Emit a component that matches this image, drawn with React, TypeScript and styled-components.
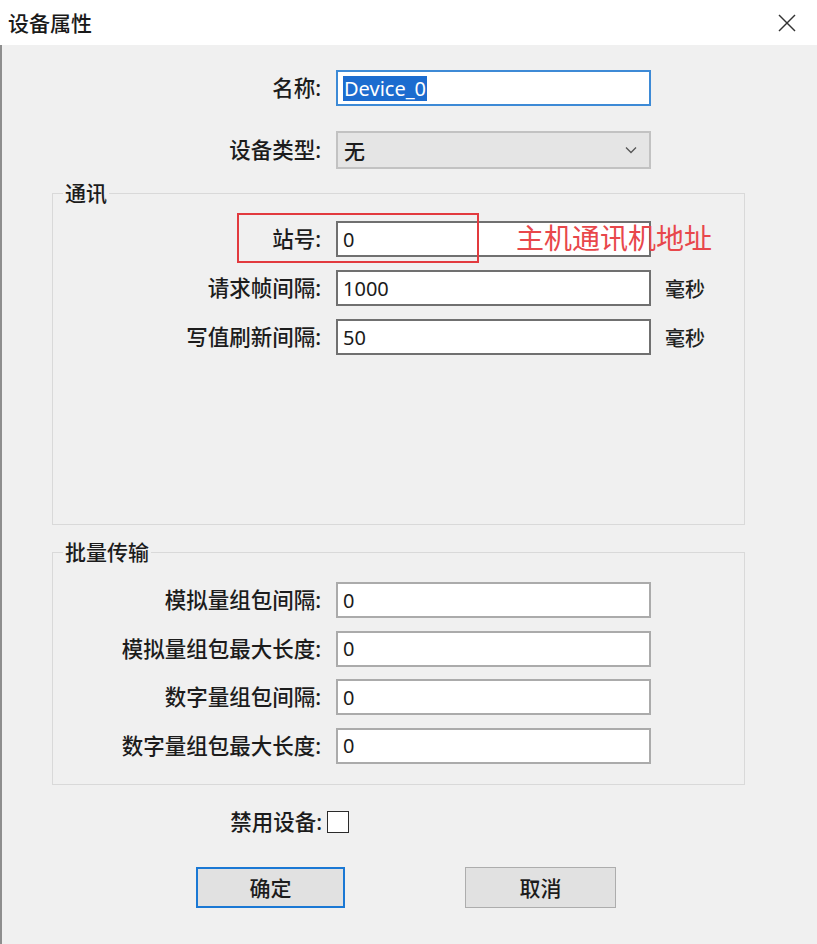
import React from "react";
import styled, { createGlobalStyle } from "styled-components";

const GlobalStyle = createGlobalStyle`
  html, body { margin: 0; padding: 0; background: #f0f0f0; }
  body {
    font-family: "Noto Sans", "Noto Sans CJK SC", sans-serif;
    font-weight: 500;
    color: #1c1c1c;
  }
  * { box-sizing: border-box; }
`;

const Window = styled.div`
  width: 817px;
  height: 944px;
  display: flex;
  flex-direction: column;
  background: #f0f0f0;
  overflow: hidden;
`;

const TitleBar = styled.div`
  height: 45px;
  flex-shrink: 0;
  background: #ffffff;
  display: flex;
  align-items: center;
  justify-content: space-between;
  padding: 0 21px 0 8px;
`;

const Title = styled.div`
  font-size: 21px;
  line-height: 28px;
  color: #1a1a1a;
`;

const CloseButton = styled.div`
  width: 18px;
  height: 18px;
  display: flex;
  color: #333;
`;

const Body = styled.div`
  flex: 1;
  border-left: 2px solid #8e8e8e;
  display: flex;
  flex-direction: column;
  padding-top: 25px;
`;

const FieldRow = styled.div<{ $label: number; $height?: number; $top?: number }>`
  position: relative;
  display: grid;
  grid-template-columns: ${(p) => p.$label}px 315px auto;
  column-gap: 15px;
  align-items: center;
  height: ${(p) => p.$height ?? 36}px;
  margin-top: ${(p) => p.$top ?? 0}px;
`;

const Label = styled.div`
  text-align: right;
  white-space: nowrap;
  font-size: 21.5px;
  line-height: 28px;
`;

const TextBox = styled.div<{ $tone: "focus" | "dark" | "light" }>`
  height: 100%;
  display: flex;
  align-items: center;
  padding-left: 5px;
  background: #ffffff;
  font-size: 20px;
  font-weight: 400;
  color: #1a1a1a;
  border: 2px solid
    ${(p) => (p.$tone === "focus" ? "#3d8ad6" : p.$tone === "dark" ? "#707070" : "#ababab")};
`;

const Selected = styled.span`
  background: #1c6ccf;
  color: #ffffff;
  height: 25px;
  line-height: 25px;
  padding: 0 1px;
`;

const Combo = styled.div`
  height: 100%;
  display: flex;
  align-items: center;
  justify-content: space-between;
  padding: 0 12px 0 6px;
  background: #e5e5e5;
  border: 2px solid #c2c2c2;
  font-size: 21px;
`;

const Unit = styled.div`
  font-size: 20px;
  margin-left: -1px;
  color: #222;
`;

const Group = styled.fieldset<{ $top: number; $padTop: number; $padBottom: number }>`
  margin: ${(p) => p.$top}px 0 0 50px;
  width: 693px;
  min-width: 0;
  border: 1px solid #d9d9d9;
  padding: ${(p) => p.$padTop}px 0 ${(p) => p.$padBottom}px 0;
`;

const GroupTitle = styled.legend`
  margin-left: 10px;
  padding: 0 2px;
  font-size: 21px;
  line-height: 28px;
`;

const Rows = styled.div<{ $gap: number }>`
  display: flex;
  flex-direction: column;
  gap: ${(p) => p.$gap}px;
`;

const AnnotationBox = styled.div`
  position: absolute;
  left: 184px;
  top: -8px;
  width: 242px;
  height: 50px;
  border: 2px solid #e23a3e;
  pointer-events: none;
`;

const AnnotationText = styled.div`
  position: absolute;
  left: 463px;
  top: 1px;
  font-size: 28px;
  font-weight: 400;
  line-height: 32px;
  color: #e8474b;
  white-space: nowrap;
`;

const CheckRow = styled.div`
  display: flex;
  align-items: center;
  height: 22px;
  margin-top: 26px;
`;

const CheckLabel = styled(Label)`
  width: 320px;
`;

const CheckBox = styled.div`
  width: 22px;
  height: 22px;
  margin-left: 5px;
  background: #ffffff;
  border: 1.5px solid #2b2b2b;
`;

const ButtonRow = styled.div`
  display: flex;
  gap: 120px;
  padding-left: 194px;
  margin-top: 34px;
`;

const Button = styled.div<{ $primary?: boolean; $width: number }>`
  width: ${(p) => p.$width}px;
  height: 41px;
  display: flex;
  align-items: center;
  justify-content: center;
  background: #e1e1e1;
  font-size: 21px;
  border: ${(p) => (p.$primary ? "2px solid #1a78d4" : "1px solid #adadad")};
`;

const Chevron = () => (
  <svg width="12" height="8" viewBox="0 0 12 8">
    <polyline points="1,1.5 6,6.5 11,1.5" fill="none" stroke="#555" strokeWidth="1.3" />
  </svg>
);

const CloseIcon = () => (
  <svg width="18" height="18" viewBox="0 0 18 18">
    <line x1="1" y1="1" x2="17" y2="17" stroke="#333" strokeWidth="1.4" />
    <line x1="17" y1="1" x2="1" y2="17" stroke="#333" strokeWidth="1.4" />
  </svg>
);

const commRows = [
  { label: "站号:", value: "0", unit: "", annotate: true },
  { label: "请求帧间隔:", value: "1000", unit: "毫秒" },
  { label: "写值刷新间隔:", value: "50", unit: "毫秒" },
];

const batchRows = [
  { label: "模拟量组包间隔:", value: "0" },
  { label: "模拟量组包最大长度:", value: "0" },
  { label: "数字量组包间隔:", value: "0" },
  { label: "数字量组包最大长度:", value: "0" },
];

export default function App() {
  return (
    <>
      <GlobalStyle />
      <Window>
        <TitleBar>
          <Title>设备属性</Title>
          <CloseButton>
            <CloseIcon />
          </CloseButton>
        </TitleBar>
        <Body>
          <FieldRow $label={319}>
            <Label>名称:</Label>
            <TextBox $tone="focus">
              <Selected>Device_0</Selected>
            </TextBox>
          </FieldRow>
          <FieldRow $label={319} $height={38} $top={25}>
            <Label>设备类型:</Label>
            <Combo>
              <span>无</span>
              <Chevron />
            </Combo>
          </FieldRow>

          <Group $top={10} $padTop={14} $padBottom={169}>
            <GroupTitle>通讯</GroupTitle>
            <Rows $gap={13}>
              {commRows.map((r) => (
                <FieldRow key={r.label} $label={268}>
                  <Label>{r.label}</Label>
                  <TextBox $tone="dark">{r.value}</TextBox>
                  <Unit>{r.unit}</Unit>
                  {r.annotate && (
                    <>
                      <AnnotationBox />
                      <AnnotationText>主机通讯机地址</AnnotationText>
                    </>
                  )}
                </FieldRow>
              ))}
            </Rows>
          </Group>

          <Group $top={13} $padTop={16} $padBottom={20}>
            <GroupTitle>批量传输</GroupTitle>
            <Rows $gap={12.5}>
              {batchRows.map((r) => (
                <FieldRow key={r.label} $label={268}>
                  <Label>{r.label}</Label>
                  <TextBox $tone="light">{r.value}</TextBox>
                  <span />
                </FieldRow>
              ))}
            </Rows>
          </Group>

          <CheckRow>
            <CheckLabel>禁用设备:</CheckLabel>
            <CheckBox />
          </CheckRow>

          <ButtonRow>
            <Button $primary $width={149}>确定</Button>
            <Button $width={151}>取消</Button>
          </ButtonRow>
        </Body>
      </Window>
    </>
  );
}
